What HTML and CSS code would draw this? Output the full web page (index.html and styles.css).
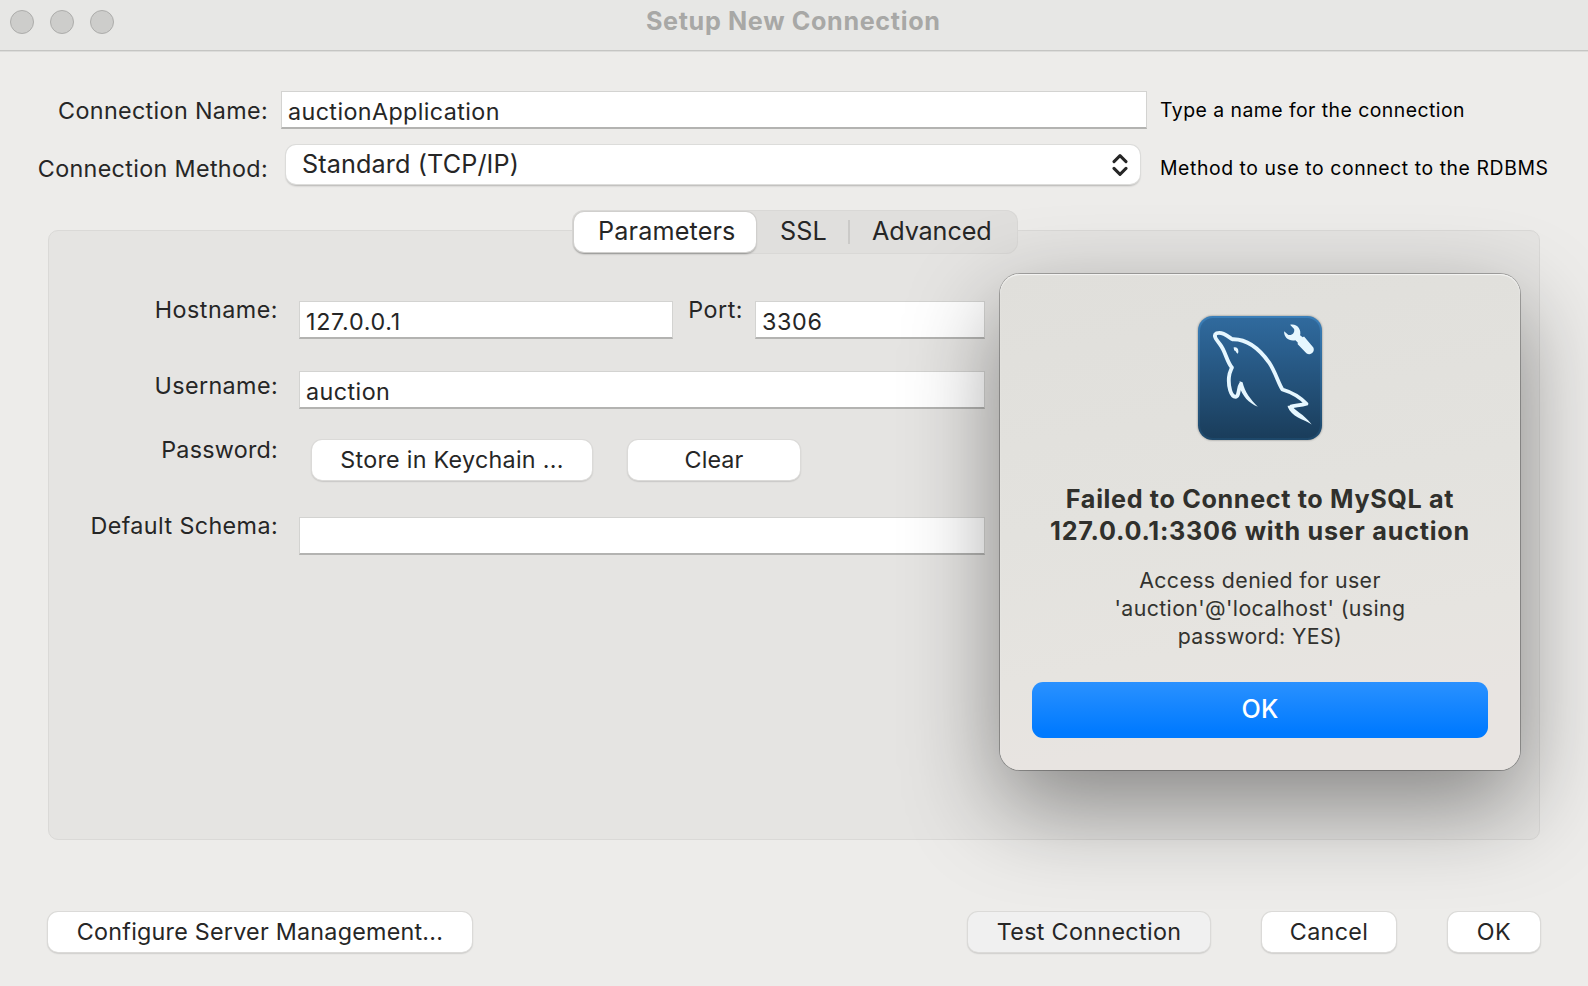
FILE: index.html
```html
<!DOCTYPE html>
<html lang="en">
<head>
<meta charset="utf-8">
<title>Setup New Connection</title>
<link rel="stylesheet" href="styles.css">
</head>
<body>
<div class="window">
  <header class="titlebar">
    <div class="lights"><i class="light"></i><i class="light"></i><i class="light"></i></div>
    <h1 class="title">Setup New Connection</h1>
  </header>

  <main class="content">
    <div class="top-row">
      <label class="label name-label">Connection Name:</label>
      <div class="field name-field">auctionApplication</div>
      <span class="hint name-hint">Type a name for the connection</span>
    </div>
    <div class="top-row method-row">
      <label class="label method-label">Connection Method:</label>
      <div class="select">
        <span class="select-text">Standard (TCP/IP)</span>
        <svg class="chevrons" viewBox="0 0 16 24" width="16" height="24"><path d="M2 8.6 8 2.6l6 6M2 15.4l6 6 6-6"/></svg>
      </div>
      <span class="hint method-hint">Method to use to connect to the RDBMS</span>
    </div>

    <nav class="tabs">
      <span class="tab tab-active">Parameters</span>
      <span class="tab tab-ssl">SSL</span>
      <i class="tab-divider"></i>
      <span class="tab tab-advanced">Advanced</span>
    </nav>

    <section class="panel">
      <div class="row">
        <label class="label row-label wide">Hostname:</label>
        <div class="field host-field">127.0.0.1</div>
        <label class="label port-label wide">Port:</label>
        <div class="field port-field">3306</div>
      </div>
      <div class="row user-row">
        <label class="label row-label user-label">Username:</label>
        <div class="field long-field user-field">auction</div>
      </div>
      <div class="row password-row">
        <label class="label row-label">Password:</label>
        <button class="button store">Store in Keychain ...</button>
        <button class="button clear">Clear</button>
      </div>
      <div class="row schema-row">
        <label class="label row-label schema-label">Default Schema:</label>
        <div class="field long-field"></div>
      </div>
    </section>

    <footer class="actions">
      <button class="button configure">Configure Server Management...</button>
      <button class="button test">Test Connection</button>
      <button class="button cancel">Cancel</button>
      <button class="button confirm">OK</button>
    </footer>
  </main>

  <div class="alert">
    <svg class="app-icon" viewBox="54 47 373 373" width="124" height="124">
      <defs>
        <linearGradient id="sea" x1="0" y1="0" x2="0" y2="1">
          <stop offset="0" stop-color="#306a9d"/><stop offset=".3" stop-color="#295d8b"/><stop offset="1" stop-color="#1a3d5b"/>
        </linearGradient>
        <linearGradient id="rim" x1="0" y1="0" x2="0" y2="1">
          <stop offset="0" stop-color="#3b7fb9"/><stop offset="1" stop-color="#1d4769"/>
        </linearGradient>
      </defs>
      <rect x="54" y="47" width="373" height="373" rx="44" fill="url(#rim)"/>
      <rect x="60" y="53" width="361" height="361" rx="39" fill="url(#sea)"/>
      <path class="line" d="M183 251C175 262 178 290 167 290C152 290 145 257 147 232C148 216 154 208 156 202C140 184 137 153 120 132C107 116 99 104 110 99C127 93 142 107 157 117C205 115 240 148 268 187C288 218 296 250 308 268C335 276 361 291 380 311C363 316 345 316 331 320"/>
      <path class="solid" d="M179 243L188 246C195 276 212 297 234 320C206 308 188 288 180 262ZM324 317L336 318C345 331 371 342 396 373C371 358 335 350 324 321ZM161 142C170 138 179 147 174 160C168 160 171 153 163 151Z"/>
      <path class="solid" d="M331 73C352 68 366 88 361 105L369 111 373 109 401 142C407 156 392 167 380 159L354 132 354 127 347 120C328 124 312 112 313 93L326 104C337 107 346 96 343 86Z"/>
    </svg>
    <h2 class="alert-title"><span class="t1">Failed to Connect to MySQL at</span><br><span class="t2">127.0.0.1:3306 with user auction</span></h2>
    <p class="alert-text">Access denied for user<br>'auction'@'localhost' (using<br>password: YES)</p>
    <button class="alert-ok">OK</button>
  </div>
</div>
</body>
</html>
```
FILE: styles.css
```css
* { box-sizing: border-box; }
body { margin: 0; }
h1, h2, p { margin: 0; }
.window {
  position: relative;
  width: 1588px;
  height: 986px;
  overflow: hidden;
  background: #edecea;
  color: #262626;
  font-family: Inter, "Liberation Sans", sans-serif;
  font-size: 23.3px;
  letter-spacing: .4px;
}
.titlebar {
  display: flex;
  height: 52px;
  background: #e7e7e5;
  border-bottom: 1px solid #dcdcda;
  box-shadow: inset 0 -1px #c5c5c3;
}
.lights { display: flex; gap: 16px; padding: 10px 0 0 10px; width: 646px; }
.light { width: 24px; height: 24px; border: 1px solid #adadab; border-radius: 50%; background: #cdcdcb; }
.title { font-size: 25.2px; font-weight: 700; letter-spacing: .63px; line-height: 42px; color: #a8a8a6; white-space: nowrap; }

.content { padding-top: 39px; }
.top-row { display: flex; align-items: flex-start; height: 38px; white-space: nowrap; }
.label { text-align: right; line-height: 30px; letter-spacing: .35px; }
.name-label, .method-label { width: 268px; }
.name-label { margin-top: 5px; }
.field {
  height: 38px;
  border: 1px solid #d3d3d1;
  border-bottom: 2px solid #b3b3b1;
  background: #fff;
  line-height: 39px;
  padding-left: 6px;
  letter-spacing: .4px;
}
.name-field { width: 866px; margin-left: 13px; }
.hint { font-size: 19.4px; line-height: 30px; color: #000; letter-spacing: .47px; }
.name-hint { margin: 4px 0 0 13px; }
.method-row { margin-top: 16px; height: 41px; }
.method-label { margin-top: 9px; }
.select {
  display: flex;
  justify-content: space-between;
  width: 854px;
  height: 39px;
  margin-left: 18px;
  padding: 0 12px 0 16px;
  border-radius: 10px;
  background: #fff;
  box-shadow: 0 0 0 1px #dcdcda, 0 2px 2px rgba(0,0,0,.24);
}
.select-text { font-size: 25.2px; line-height: 38px; letter-spacing: .12px; }
.chevrons { margin-top: 8px; }
.chevrons path { fill: none; stroke: #262626; stroke-width: 3; stroke-linecap: round; stroke-linejoin: round; }
.method-hint { margin: 8px 0 0 20px; letter-spacing: .575px; }

.tabs {
  position: relative;
  z-index: 1;
  display: flex;
  width: 446px;
  height: 44px;
  margin: 24px 0 0 572px;
  padding: 2px;
  border-radius: 12px;
  background: #e0dfdd;
  box-shadow: inset 0 0 0 1px #d9d8d6;
  font-size: 25.2px;
  line-height: 39px;
  letter-spacing: .1px;
}
.tab-active { width: 182px; height: 40px; padding-left: 24px; border-radius: 10px; background: #fff; letter-spacing: .15px; box-shadow: 0 0 0 1px #d0cfcd, 0 2px 2px rgba(0,0,0,.35); }
.tab-ssl { padding-left: 24px; width: 92px; }
.tab-divider { width: 2px; height: 24px; margin-top: 8px; background: #cbcac8; }
.tab-advanced { padding-left: 22px; letter-spacing: -.12px; }

.panel {
  width: 1492px;
  height: 610px;
  margin: -24px 0 0 48px;
  padding-top: 70px;
  border: 1px solid #dad9d7;
  border-radius: 10px;
  background: #e5e4e2;
}
.row { display: flex; align-items: flex-start; height: 38px; white-space: nowrap; }
.row-label { width: 229px; margin: -6px 21px 0 0; letter-spacing: .25px; }
.wide { letter-spacing: .5px; }
.host-field { width: 374px; line-height: 40px; letter-spacing: .7px; }
.port-label { width: 70px; margin: -6px 12px 0 0; }
.port-field { width: 230px; line-height: 40px; letter-spacing: .67px; }
.long-field { width: 686px; }
.user-row { margin-top: 32px; }
.user-label { margin-top: 0; letter-spacing: .4px; }
.user-field { line-height: 40px; letter-spacing: .45px; }
.password-row { margin-top: 31px; height: 40px; }
.schema-row { margin-top: 37px; }
.schema-label { letter-spacing: .4px; }
.password-row .row-label { margin: -5px 34px 0 0; }

.button {
  height: 40px;
  padding: 0;
  border: 0;
  border-radius: 10px;
  background: #fff;
  color: inherit;
  font: inherit;
  letter-spacing: .33px;
  line-height: 38px;
  box-shadow: 0 0 0 1px #dbdad8, 0 1px 2px rgba(0,0,0,.4);
}
.store { width: 280px; letter-spacing: .28px; }
.clear { width: 172px; margin-left: 36px; letter-spacing: .1px; }
.actions { display: flex; padding: 72px 48px 0; }
.configure { width: 424px; letter-spacing: .24px; }
.test { width: 242px; margin-left: 496px; background: #f0f0f0; }
.cancel { width: 134px; margin-left: 52px; }
.confirm { width: 92px; margin-left: 52px; letter-spacing: .6px; }

.alert {
  position: absolute;
  left: 1000px;
  top: 274px;
  z-index: 2;
  display: flex;
  flex-direction: column;
  align-items: center;
  width: 520px;
  height: 496px;
  padding-top: 42px;
  border-radius: 20px;
  background: linear-gradient(170deg, #e0dfdb 0%, #e3e2de 45%, #e6e4e0 70%, #e8e4e1 85%);
  box-shadow: inset 0 1px 1px rgba(255,255,255,.7), 0 0 0 1px rgba(0,0,0,.27), 0 35px 95px rgba(0,0,0,.42);
}
.app-icon { display: block; filter: drop-shadow(0 0 1px rgba(0,0,0,.4)); }
.app-icon .line { fill: none; stroke: #e6f7ff; stroke-width: 11.5; stroke-linejoin: round; }
.app-icon .solid { fill: #e6f7ff; }
.alert-title { margin-top: 43px; font-size: 25.2px; font-weight: 700; line-height: 32px; text-align: center; color: #30302c; white-space: nowrap; }
.t1 { letter-spacing: .64px; }
.t2 { letter-spacing: .75px; }
.alert-text { margin-top: 19px; font-size: 21.3px; line-height: 28px; text-align: center; color: #33332f; }
.alert-ok {
  width: 456px;
  height: 56px;
  margin-top: 32px;
  padding: 0 0 2px;
  border: 0;
  border-radius: 11px;
  background: linear-gradient(#2a91ff, #007aff 90%);
  color: #fff;
  font: 500 25.2px/52px Inter, "Liberation Sans", sans-serif;
  letter-spacing: .2px;
}
```
